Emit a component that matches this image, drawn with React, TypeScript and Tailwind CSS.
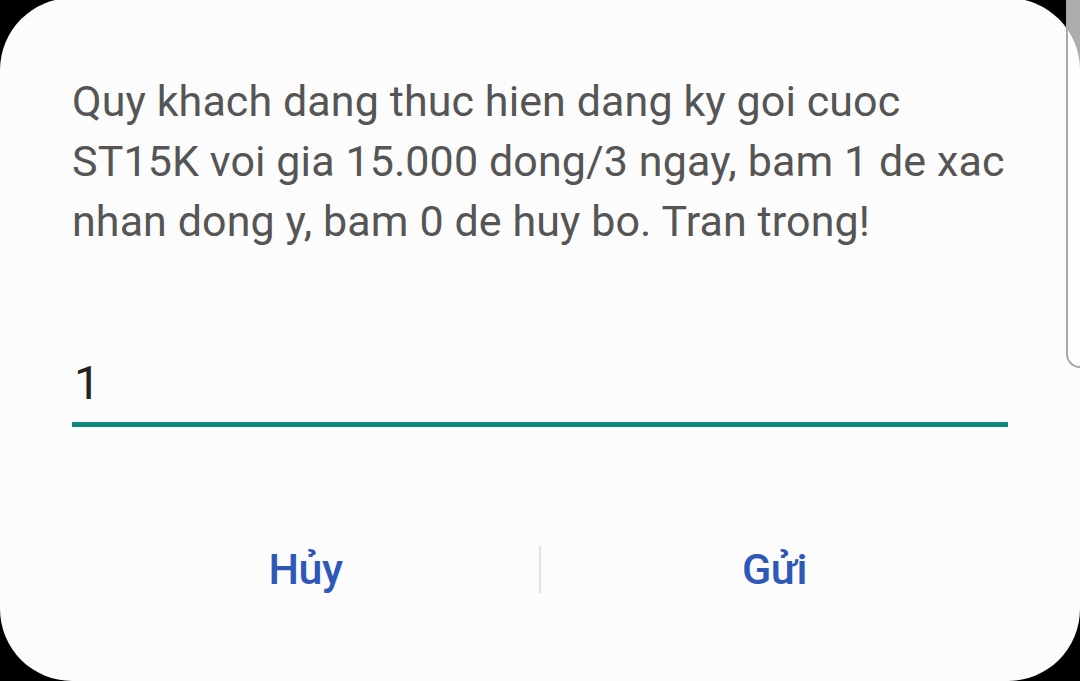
import React from "react";

export default function App() {
  return (
    <div className="relative w-[1080px] h-[681px] bg-black overflow-hidden" style={{ fontFamily: "Roboto, 'Noto Sans', sans-serif" }}>
      <div className="w-[1080px] h-[683px] -mt-[2px] rounded-[72px] bg-[#fcfcfc] flex flex-col px-[72px] pt-[73px]">
        <p className="text-[43px] leading-[60px] text-[#555555] tracking-[0.1px] whitespace-nowrap">
          Quy khach dang thuc hien dang ky goi cuoc<br />
          ST15K voi gia 15.000 dong/3 ngay, bam 1 de xac<br />
          nhan dong y, bam 0 de huy bo. Tran trong!
        </p>
        <div className="mt-[107px] border-b-[5px] border-[#11897c] pb-[14px] pl-[2px]">
          <span className="text-[47px] leading-[50px] text-[#222222]">1</span>
        </div>
        <div className="mt-[118px] flex items-center">
          <div className="flex-1 flex justify-center">
            <span className="text-[43px] leading-[48px] font-medium text-[#2d58b8] tracking-[-0.5px]">Hủy</span>
          </div>
          <div className="w-[2px] h-[47px] bg-[#e2e2e2]" />
          <div className="flex-1 flex justify-center">
            <span className="text-[43px] leading-[48px] font-medium text-[#2d58b8] tracking-[-0.5px]">Gửi</span>
          </div>
        </div>
      </div>
      <div className="absolute right-[-20px] top-[-20px] w-[34px] h-[388px] rounded-bl-[14px] border-l-2 border-b-2 border-[#a8a8a8] bg-[rgba(255,255,255,0.68)]" />
    </div>
  );
}
